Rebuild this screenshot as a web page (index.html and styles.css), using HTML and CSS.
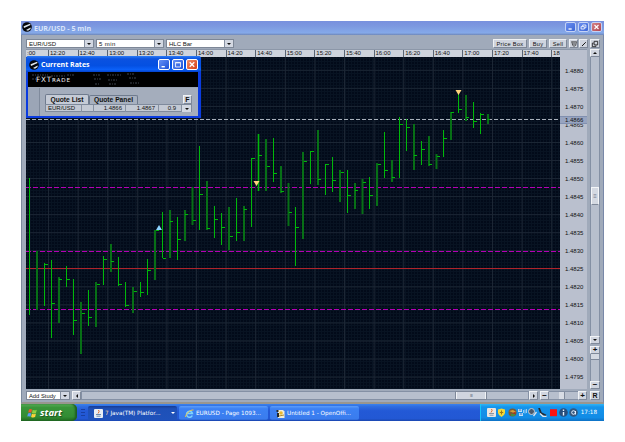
FILE: index.html
```html
<!DOCTYPE html>
<html lang="en">
<head>
<meta charset="utf-8">
<title>EUR/USD - 5 min</title>
<link rel="stylesheet" href="styles.css">
</head>
<body>
<main class="desktop">
  <section class="window">
    <header class="titlebar">
      <svg class="app-icon" viewBox="0 0 10 10"><circle cx="5" cy="5" r="4.8" fill="#05070b"/><path d="M1.6 4.2 8 1.8 8.6 3 2 6zM4 8 8.6 5.6V7L6 8.8z" fill="#dfe6ee"/></svg>
      <h1>EUR/USD - 5 min</h1>
      <div class="winbtns">
        <span class="wb"><svg viewBox="0 0 11 10"><path d="M3 7.5h4" stroke="#fff" stroke-width="1.6"/></svg></span>
        <span class="wb"><svg viewBox="0 0 11 10"><path d="M4.5 4V2.5H8.5V6H7M2.5 4.5h4v3h-4z" fill="none" stroke="#fff"/></svg></span>
        <span class="wb close"><svg viewBox="0 0 11 10"><path d="M3 2.5l5 5M8 2.5l-5 5" stroke="#fff" stroke-width="1.4"/></svg></span>
      </div>
    </header>

    <div class="toolbar">
      <div class="combo"><span>EUR/USD</span><b class="arrow"></b></div>
      <div class="combo wide"><span>5 min</span><b class="arrow"></b></div>
      <div class="combo"><span>HLC Bar</span><b class="arrow"></b></div>
      <div class="actions">
        <span class="btn price">Price Box</span>
        <span class="btn buy">Buy</span>
        <span class="btn sell">Sell</span>
        <span class="btn ico"><svg viewBox="0 0 9 9"><path d="M1.5 2h6M2 2l1 4 1.500 1.200L6.500 6l.8-4M3.500 2.500V6M5.500 2.500V6" fill="none" stroke="#333" stroke-width=".8"/></svg></span>
        <span class="btn ico"><svg viewBox="0 0 9 9"><path d="M2.200 6.800 6.500 2.500" stroke="#111" stroke-width="1.100"/></svg></span>
        <span class="btn ico last"><svg viewBox="0 0 9 9"><path d="M3.500 1.500h4v4h-4zM3 3.500H1.500v4h4V6" fill="none" stroke="#111" stroke-width=".9"/></svg></span>
      </div>
    </div>

    <div class="work">
      <div class="plot">
        <div class="times"><i class="first">:00</i><i>12:20</i><i>12:40</i><i>13:00</i><i>13:20</i><i>13:40</i><i>14:00</i><i>14:20</i><i>14:40</i><i>15:00</i><i>15:20</i><i>15:40</i><i>16:00</i><i>16:20</i><i>16:40</i><i>17:00</i><i>17:20</i><i>17:40</i><i>18</i></div>
        <svg class="chart" viewBox="26 57 534 332">
          <defs>
            <pattern id="fine" x="48" y="70" width="3" height="3" patternUnits="userSpaceOnUse"><path d="M0 .5h3M.5 0v3" stroke="#081322" stroke-width="1"/></pattern>
            <pattern id="cols" x="48" y="57" width="29.600" height="332" patternUnits="userSpaceOnUse"><path d="M.5 0v332" stroke="#1c2634"/></pattern>
            <pattern id="rows" x="26" y="69.800" width="534" height="18.050" patternUnits="userSpaceOnUse"><path d="M0 .5h534" stroke="#1c2634"/></pattern>
          </defs>
          <rect x="26" y="57" width="534" height="332" fill="#020a19"/>
          <rect x="26" y="57" width="534" height="332" fill="url(#fine)"/>
          <rect x="26" y="57" width="534" height="332" fill="url(#cols)"/>
          <rect x="26" y="57" width="534" height="332" fill="url(#rows)"/>
          <path class="level" d="M26 187.500H560M26 251.500H560M26 309.500H560"/>
          <path class="entry" d="M26 268.500H560"/>
          <path class="last-price" d="M26 119.500H560"/>
          <path class="bar dim" d="M37 251V310M59 277V323M81 302V354M96 282V327M111 244V272M133 287V313M155 230V280M170 210V258M185 210V241M192.500 187V225M207 181V230M229 207V250M244 206V241M258.500 134V191M266 139V191M281 166V193M288.500 183V226M303 152V239M318 130V185M340 170V202M355 183V209M362.500 179V214M377 163V206M392 160V182M414 124V170M429 136V166M436.500 154V169M451 112V140M466 95V121M488 114V124"/>
          <path class="bar" d="M29.500 178V315M44.500 263V306M51.500 260V338M66.500 266V287M73.500 279V335M88.500 290V326M103.500 256V285M118.500 257V286M125.500 282V307M140.500 282V297M147.500 259V295M162.500 212V258M177.500 217V260M199.500 146V230M214.500 206V238M221.500 213V245M236.500 198V241M251.500 158V227M258.500 134V191M273.500 138V182M295.500 207V266M310.500 151V184M325.500 164V195M332.500 157V192M347.500 170V213M369.500 177V209M384.500 132V178M399.500 117V178M406.500 119V151M421.500 141V165M443.500 130V157M458.500 93V113M473.500 102V128M480.500 113V134"/>
          <path class="bar" d="M45 264.500h3M52 303.500h3M59 279.500h3M67 279.500h3M74 320.500h3M82 313.500h3M89 317.500h3M97 284.500h3M104 259.500h3M111 261.500h3M119 284.500h3M126 305.500h3M134 291.500h3M141 292.500h3M148 270.500h3M156 230.500h3M163 258.500h3M170 221.500h3M178 239.500h3M185 214.500h3M193 220.500h3M200 194.500h3M207 228.500h3M215 219.500h3M222 227.500h3M230 236.500h3M237 232.500h3M244 209.500h3M252 158.500h3M259 155.500h3M267 166.500h3M274 173.500h3M281 191.500h3M289 212.500h3M296 227.500h3M304 161.500h3M311 151.500h3M318 179.500h3M326 164.500h3M333 180.500h3M341 172.500h3M348 195.500h3M355 190.500h3M363 182.500h3M370 195.500h3M378 164.500h3M385 170.500h3M392 177.500h3M400 124.500h3M407 127.500h3M414 155.500h3M422 149.500h3M429 164.500h3M437 156.500h3M444 138.500h3M451 112.500h3M459 109.500h3M466 117.500h3M474 121.500h3M481 114.500h3M488 119.500h2"/>
          <path d="M159 225l3 5h-6z" fill="#8cd3ff"/>
          <path d="M253.500 181h6l-3 5zM455.500 90h6l-3 5z" fill="#ffd27c"/>
        </svg>
      </div>
      <div class="prices">
        <i>1.4880</i><i>1.4875</i><i>1.4870</i><i>1.4865</i><i>1.4860</i><i>1.4855</i><i>1.4850</i><i>1.4845</i><i>1.4840</i><i>1.4835</i><i>1.4830</i><i>1.4825</i><i>1.4820</i><i>1.4815</i><i>1.4810</i><i>1.4805</i><i>1.4800</i><i>1.4795</i>
        <span class="now">1.4866</span>
      </div>
      <div class="vbar">
        <span class="sb up"></span>
        <div class="vtrack"><span class="vthumb">≡</span></div>
        <span class="sb down"></span>
        <span class="sb plus">+</span>
        <div class="ztrack"><span></span></div>
        <span class="sb">−</span>
      </div>
    </div>

    <footer class="bottom">
      <div class="combo study"><span>Add Study</span><b class="arrow"></b></div>
      <div class="hbar">
        <span class="sb left"></span>
        <div class="htrack"><span class="hthumb">Ⅲ</span></div>
        <span class="sb right"></span>
      </div>
      <div class="zoom"><span class="sb">−</span><div class="zt"><span></span></div><span class="sb">+</span></div>
      <span class="sb reset">R</span>
    </footer>

    <section class="dialog">
      <header>
        <svg class="app-icon" viewBox="0 0 10 10"><circle cx="5" cy="5" r="4.800" fill="#05070b"/><path d="M1.600 4.200 8 1.800 8.600 3 2 6zM4 8 8.600 5.600V7L6 8.800z" fill="#dfe6ee"/></svg>
        <h2>Current Rates</h2>
        <div class="winbtns">
          <span class="wb"><svg viewBox="0 0 12 11"><path d="M3 8.200h4" stroke="#fff" stroke-width="1.700"/></svg></span>
          <span class="wb"><svg viewBox="0 0 12 11"><path d="M3 3h6v5.500H3zM3 3.500h6" fill="none" stroke="#fff"/></svg></span>
          <span class="wb close"><svg viewBox="0 0 12 11"><path d="M3.200 2.700l5.600 5.600M8.800 2.700 3.200 8.300" stroke="#fff" stroke-width="1.500"/></svg></span>
        </div>
      </header>
      <div class="banner">
        <svg viewBox="0 0 112 15"><path d="M1 3h16M1 7h10M20 4h14M22 8h10M36 3h7M62 3h8M63 7h7M64 12h5M76 3h14M77 8h9M78 12h8M96 2h8M98 6h7M99 11h9" stroke="#343a42" stroke-width="2" stroke-dasharray="2 1 1 1"/></svg>
        <span class="brand"><b>FXT</b>RADE</span>
      </div>
      <div class="panel">
        <div class="sheet">
          <div class="tabs"><span class="tab on">Quote List</span><span class="tab">Quote Panel</span><span class="sb flag">F</span></div>
          <div class="quote"><span>EUR/USD</span><span></span><span>1.4866</span><span>1.4867</span><span>0.9</span><b class="arrow"></b></div>
        </div>
      </div>
    </section>
  </section>

  <nav class="taskbar">
    <div class="start">
      <svg viewBox="0 0 11 10"><path d="M2 1.500Q3.500.5 5 1.500L4.300 4.700Q3 3.800 1.200 4.600z" fill="#f0582a"/><path d="M5.700 1.700Q7.500 2.700 9.800 1.700L9 4.900Q7 5.900 5 4.900z" fill="#8fd043"/><path d="M1 5.400Q2.700 4.600 4.200 5.500L3.500 8.700Q2 7.900.3 8.600z" fill="#5b9cf5"/><path d="M4.900 5.700Q6.800 6.600 8.900 5.700L8.100 9Q6 9.900 4.100 8.900z" fill="#ffd23c"/></svg>
      <em>start</em>
    </div>
    <span class="grip"></span>
    <div class="task active"><svg viewBox="0 0 9 9"><rect width="9" height="9" rx="1" fill="#e9eef4"/><path d="M4.500 1Q6 2.500 4 4.500" fill="none" stroke="#e06a28"/><path d="M2 5.500h5M2.500 7.200h4" stroke="#5b7fa5" stroke-width=".9"/></svg><span><b>7</b> Java(TM) Platfor...</span><u></u></div>
    <div class="task"><svg viewBox="0 0 9 9"><path d="M7.300 6.500A3 3 0 1 1 7.500 4.600H2.500" fill="none" stroke="#7dd3ff" stroke-width="1.500"/><path d="M.5 8C1 4.500 5 .6 8.500 1" fill="none" stroke="#f3c544"/></svg><span>EURUSD - Page 1093...</span></div>
    <div class="task"><svg viewBox="0 0 9 9"><path d="M2 1h5l1.500 1.500V9H2z" fill="#f2efda"/><path d="M.5 1h2v2h-2zM1 4h2v4H1z" fill="#23292c"/><circle cx="5" cy="4" r="1.800" fill="#e8b931"/><path d="M3 7l5-1" stroke="#b08c2a"/></svg><span>Untitled 1 - OpenOffi...</span></div>
    <div class="tray">
      <svg viewBox="0 0 9 9"><rect width="9" height="9" rx="1" fill="#e9e6e2"/><path d="M4.500 1Q6 2.500 4 4.500" fill="none" stroke="#e06a28"/><path d="M2 5.500h5M2.500 7.200h4" stroke="#7a8ba0" stroke-width=".9"/></svg>
      <svg viewBox="0 0 9 9"><path d="M1 1.500 4.500.5 8 1.500V5Q7.500 7.500 4.500 9 1.500 7.500 1 5z" fill="#f4d938"/><path d="M4.500 2.500v4M2.800 4.500h3.400" stroke="#a27a10"/></svg>
      <svg viewBox="0 0 9 9"><circle cx="4.500" cy="4.500" r="4" fill="#7a5b32"/><path d="M1 3l4-1 3 2-2 1z" fill="#d99d3a"/><path d="M3 6h4v2H3z" fill="#4c8a3e"/><path d="M5.500 5h2" stroke="#b9231f" stroke-width="1.500"/></svg>
      <svg viewBox="0 0 9 9"><path d="M0 1h4v3H0zM1 5h4v3H1z" fill="#bfe0f7"/><path d="M.8 2h2.500M1.800 6h2.500" stroke="#2a6dc4"/><path d="M5.500 2v3M7 1.500v4M8.500 1v4" stroke="#b8dcf9" stroke-width=".8"/></svg>
      <svg viewBox="0 0 9 9"><circle cx="3.500" cy="3.500" r="3" fill="#4b5a6c" stroke="#c4ccd5"/><path d="M5.500 8 8.500 4" stroke="#dce4ee" stroke-width="1.300"/></svg>
      <svg viewBox="0 0 9 9"><path d="M1 0l2 5 5 2.500" fill="none" stroke="#222b35" stroke-width="1.800"/><path d="M2 5.500 5 8.300h3.500" fill="none" stroke="#e4e7ea" stroke-width="1.300"/></svg>
      <svg viewBox="0 0 9 9"><rect x="1" y="1.200" width="7" height="7" fill="#fb1212"/></svg>
      <svg viewBox="0 0 9 9"><circle cx="4.500" cy="4.500" r="4.300" fill="#284e7c"/><path d="M4.500 1.500v1.500M4.500 4v3.500" stroke="#e6f1ff" stroke-width="1.400"/></svg>
      <svg viewBox="0 0 9 9"><circle cx="4.500" cy="4.500" r="4.300" fill="#33587f"/><circle cx="4.500" cy="4.500" r="1.800" fill="none" stroke="#e6f1ff"/><path d="M6.500 3v3.500" stroke="#e6f1ff"/></svg>
      <time>17:18</time>
    </div>
  </nav>
</main>
</body>
</html>
```
FILE: styles.css
```css
* { box-sizing: border-box; }
body {
  margin: 0;
  background: #fff;
  font: 6px/8px "Liberation Sans", sans-serif;
  color: #111;
  white-space: nowrap;
}
i { font-style: normal; }
svg { display: block; }
.desktop { width: 583px; margin: 21px 0 0 21px; }
.window {
  position: relative;
  height: 383px;
  background: #a0aaba;
  border-left: 1px solid #7d8a9d;
  border-right: 1px solid #7988a8;
  border-bottom: 2px solid #99968f;
}

/* title bars */
.titlebar {
  display: flex;
  align-items: center;
  height: 14px;
  margin: 0 -1px;
  padding: 0 2px 2px 1px;
  background: linear-gradient(#7890de 0, #7c98e0 35%, #85a9e9 85%, #6e86b8 100%);
}
.app-icon { width: 10px; height: 10px; }
h1, h2 { margin: 0; font-family: "Open Sans", sans-serif; font-weight: 700; }
h1 { margin: 1px 0 0 2px; font-size: 7.100px; line-height: 10px; color: #d9e4fa; }
.winbtns { display: flex; gap: 2px; margin-left: auto; }
.wb {
  width: 11px;
  height: 10px;
  border: .5px solid #c3d2f5;
  border-radius: 2px;
  background: linear-gradient(135deg, #6c8ff0, #3c66d6);
}
.wb svg { width: 100%; height: 100%; }
.wb.close { background: linear-gradient(135deg, #d48386, #b04552); }

/* toolbar */
.toolbar { display: flex; gap: 2px; height: 14px; padding: 4px 3px 1px 4px; }
.combo { display: flex; width: 68px; height: 9px; border: 1px solid #7d8797; background: #fff; }
.combo span { flex: 1; padding-left: 2px; line-height: 8px; }
.combo.wide { letter-spacing: .4px; }
.arrow {
  display: flex;
  align-items: center;
  justify-content: center;
  width: 9px;
  background: #d3d8e2;
  border-left: 1px solid #8791a2;
}
.arrow::after { content: ""; border: 2px solid transparent; border-top: 2.500px solid #111; border-bottom: 0; }
.actions { display: flex; margin-left: auto; }
.btn {
  height: 9px;
  border: 1px solid #7e8898;
  border-top-color: #eef1f5;
  border-left-color: #eef1f5;
  background: #cfd4de;
  text-align: center;
  line-height: 8px;
}
.btn.price, .btn.buy, .btn.sell { font-size: 5.700px; letter-spacing: .3px; }
.price { width: 34px; margin-right: 2px; }
.buy { width: 18px; margin-right: 2px; }
.sell { width: 18px; margin-right: 2px; }
.ico { width: 9px; margin-right: 1px; }
.ico.last { width: 10px; margin: 0 0 0 1px; }
.ico svg { width: 8px; height: 8px; }

/* chart area */
.work { display: flex; height: 340px; padding-left: 4px; }
.plot { width: 534px; }
.times { display: flex; height: 8px; overflow: hidden; background: #ced3dc; border-top: 1px solid #8c97a8; }
.times i { flex: 0 0 29.600px; padding-left: 1px; border-left: 1px solid #596575; line-height: 7px; }
.times i.first { flex-basis: 22px; padding-left: 1px; border-left: 0; }
.chart { width: 534px; height: 332px; }
.level { stroke: #b500b5; stroke-dasharray: 5 2; fill: none; }
.entry { stroke: #b0242b; fill: none; }
.last-price { stroke: #a9b0bb; stroke-dasharray: 4 2; fill: none; }
.bar { stroke: #00b80a; fill: none; }
.bar.dim { stroke: #076f16; stroke-width: 2; }
.prices {
  position: relative;
  width: 27px;
  padding-top: 12.500px;
  background: #bac0ce;
  border-top: 1px solid #8c97a8;
}
.prices i { display: block; height: 18.050px; padding-left: 5px; line-height: 17px; }
.now {
  position: absolute;
  top: 66px;
  left: 0;
  width: 27px;
  height: 8px;
  padding-left: 5px;
  background: #97a4c0;
  border-top: 1px solid #8190b0;
  border-bottom: 1px solid #8190b0;
  line-height: 7px;
}
.vbar { display: flex; flex-direction: column; width: 10px; margin-left: 3px; }
.sb {
  display: flex;
  align-items: center;
  justify-content: center;
  flex: none;
  width: 9px;
  height: 8px;
  border: 1px solid #7f899a;
  border-top-color: #f1f3f6;
  border-left-color: #f1f3f6;
  background: #d0d5df;
  font-weight: 700;
  font-size: 8px;
  line-height: 6px;
}
.vbar .sb { width: 10px; }
.up::after { content: ""; border: 2px solid transparent; border-bottom: 2.500px solid #111; border-top: 0; }
.down::after { content: ""; border: 2px solid transparent; border-top: 2.500px solid #111; border-bottom: 0; }
.left::after { content: ""; border: 2px solid transparent; border-right: 2.500px solid #111; border-left: 0; }
.right::after { content: ""; border: 2px solid transparent; border-left: 2.500px solid #111; border-right: 0; }
.vtrack { height: 279px; padding-top: 130px; background: #b7bfcd; border: 1px solid #8490a4; border-width: 0 1px; }
.vthumb {
  display: block;
  height: 18px;
  background: #d4d9e2;
  border: 1px solid #f3f5f8;
  border-bottom-color: #7f899a;
  text-align: center;
  line-height: 16px;
  color: #687486;
}
.plus { margin-top: 2px; }
.ztrack { height: 27px; background: #b7bfcd; border: 1px solid #8490a4; border-width: 0 1px; }
.ztrack span { display: block; height: 6px; background: #d4d9e2; border-bottom: 1px solid #7f899a; }

/* bottom row */
.bottom { display: flex; height: 13px; padding: 2px 0 2px 4px; }
.bottom .sb { height: 9px; }
.study { width: 44px; }
.study span { font-size: 5.800px; }
.hbar { display: flex; width: 466px; margin-left: 2px; }
.htrack { flex: 1; padding-left: 374px; background: #b7bfcd; border: 1px solid #8490a4; height: 9px; }
.hthumb {
  display: block;
  width: 30px;
  height: 7px;
  background: #d0d5df;
  border: 1px solid #f1f3f6;
  border-width: 0 1px;
  outline: .5px solid #7f899a;
  text-align: center;
  font-size: 4px;
  line-height: 7px;
  color: #687486;
}
.zoom { display: flex; width: 47px; margin-left: 2px; }
.zt { flex: 1; padding-left: 10px; background: #b7bfcd; border: 1px solid #8490a4; border-width: 1px 0; height: 9px; }
.zt span { display: block; width: 6px; height: 7px; background: #d8dce4; border-right: 1px solid #7f899a; }
.sb.reset { width: 10px; margin-left: 3px; font-size: 7px; }

/* floating rates window */
.dialog {
  position: absolute;
  left: 4px;
  top: 35px;
  width: 175px;
  height: 62px;
  padding: 0 3px 2px 2px;
  border-radius: 3px 3px 0 0;
  background: #0a3be0;
}
.dialog header {
  display: flex;
  align-items: center;
  height: 16px;
  margin: 0 -3px 0 -2px;
  padding: 1px 3px 0;
  border-radius: 3px 3px 0 0;
  background: linear-gradient(#2b7cf6 0, #0b52e0 18%, #0450e2 60%, #0a60f8 85%, #0440c8 100%);
}
h2 { margin-left: 2px; font-size: 7px; line-height: 10px; color: #fff; }
.dialog .wb { width: 12px; height: 11px; border-color: #fff; background: linear-gradient(135deg, #6791f5, #1c50d8); }
.dialog .wb.close { background: linear-gradient(135deg, #ef8e6b, #d53f14); }
.banner {
  position: relative;
  height: 15px;
  padding: 4px 0 0 8px;
  background: #000;
}
.brand {
  position: relative;
  display: block;
  color: #f2f2f2;
  font: 5.600px/8px "DejaVu Sans", sans-serif;
  letter-spacing: .9px;
}
.brand b { font-size: 7.200px; font-weight: 400; }
.banner svg { position: absolute; left: 0; top: 0; width: 118px; height: 15px; opacity: .6; }
.panel { height: 29px; padding: 1px 0 0 11px; background: #9ba5b6; }
.sheet { height: 28px; padding: 6px 6px 0 5px; background: #a4adbc; border-left: 1px solid #7f8a9c; }
.tabs { display: flex; align-items: flex-end; height: 10px; }
.tab {
  width: 49px;
  height: 9px;
  border: 1px solid #6f7b8e;
  border-bottom: 0;
  border-radius: 2px 2px 0 0;
  background: #a8b1c0;
  text-align: center;
  font: 700 6.700px/8px "Liberation Sans", sans-serif;
}
.tab.on { width: 44px; height: 10px; background: #c5cbd6; line-height: 9px; }
.flag { height: 9px; margin-left: auto; font-size: 7px; }
.quote { display: grid; grid-template-columns: 36px 12px 32px 33px 1fr 9px; height: 8px; background: #c3c9d4; border: 1px solid #7f8a9c; }
.quote span { padding: 0 3px; border-right: 1px solid #8791a2; text-align: right; line-height: 7px; }
.quote span:first-child { padding-left: 2px; text-align: left; }
.quote span:nth-child(5) { padding-right: 5px; }
.quote .arrow { border: 0; }

/* taskbar */
.taskbar {
  display: flex;
  height: 17px;
  background: linear-gradient(#3a82ee 0, #2f6de0 15%, #2359d6 40%, #2258d4 85%, #1b47b0 100%);
  color: #fff;
  font: 5.700px/9px "DejaVu Sans", sans-serif;
}
.start {
  display: flex;
  align-items: center;
  gap: 2px;
  width: 56px;
  padding-left: 6px;
  border-radius: 0 5px 5px 0;
  background: linear-gradient(#5bb35b 0, #3a953a 20%, #328c33 75%, #21691f 100%);
  box-shadow: inset -2px 0 2px #1e5e22;
}
.start svg { width: 11px; height: 10px; }
.start em { font: italic 700 9.500px/12px "Open Sans", sans-serif; text-shadow: 1px 1px 1px #1d5120; }
.grip { width: 4px; margin: 4px 3px 3px 4px; background: radial-gradient(circle, #1840a4 .7px, transparent .8px) 0 0 / 2px 3px; }
.task {
  display: flex;
  align-items: center;
  gap: 2px;
  width: 89px;
  height: 14px;
  margin: 2px 2px 0 0;
  padding-left: 6px;
  border-radius: 2px;
  background: linear-gradient(#5c9dfa 0, #3c81f3 20%, #3a7cee 90%, #2e68d4 100%);
}
.task.active { background: linear-gradient(#173c93, #1e50b7 20%, #1f52bb); }
.task svg { width: 9px; height: 9px; }
.task b { color: #ffd9a0; font-weight: 400; }
.task u { margin-left: auto; margin-right: 2px; border: 2px solid transparent; border-top-color: #fff; border-bottom: 0; }
.tray {
  display: flex;
  align-items: center;
  gap: 1.300px;
  width: 124px;
  margin-left: auto;
  padding-left: 6px;
  border-left: 1px solid #17c4f8;
  background: linear-gradient(#2fb4f6 0, #1593ea 18%, #118ce6 80%, #0e71c4 100%);
}
.tray svg { width: 9px; height: 9px; }
.tray time { margin-left: 1px; }
```
